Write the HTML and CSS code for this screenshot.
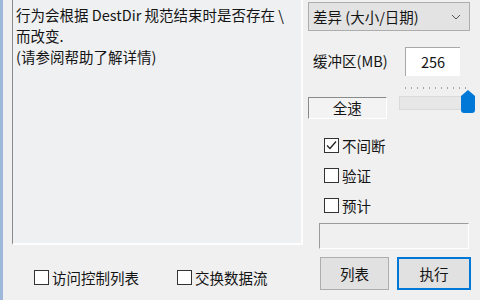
FILE: index.html
```html
<!DOCTYPE html>
<html lang="zh-CN">
<head>
  <meta charset="UTF-8">
  <title>复制选项</title>
  <link rel="stylesheet" href="styles.css">
</head>
<body>
<div class="window">
  <div class="edge"></div>

  <div class="leftside">
    <div class="desc">
      行为会根据 DestDir 规范结束时是否存在 \<br>
      而改变.<br>
      (请参阅帮助了解详情)
    </div>
    <div class="bottom-checks">
      <label class="check"><span class="box"></span>访问控制列表</label>
      <label class="check second"><span class="box"></span>交换数据流</label>
    </div>
  </div>

  <div class="rightside">
    <div class="select">
      <span>差异 (大小/日期)</span>
      <svg class="chevron" width="10" height="6" viewBox="0 0 10 6">
        <polyline points="1,1 5,5 9,1" fill="none" stroke="#555" stroke-width="1"/>
      </svg>
    </div>

    <div class="buffer">
      <span class="buffer-label">缓冲区(MB)</span>
      <div class="inputbox">256</div>
    </div>

    <div class="speed">
      <div class="speedbox">全速</div>
      <div class="slider">
        <div class="ticks"></div>
        <div class="track"></div>
        <svg class="thumb" width="14" height="23" viewBox="0 0 14 23">
          <path d="M0 6 L7 0 L14 6 V20 Q14 23 11 23 H3 Q0 23 0 20 Z" fill="#0078d7"/>
        </svg>
      </div>
    </div>

    <div class="options">
      <label class="check">
        <span class="box">
          <svg width="13" height="13" viewBox="0 0 13 13">
            <polyline points="2,6.5 5,9.5 11,2.5" fill="none" stroke="#222" stroke-width="1.3"/>
          </svg>
        </span>不间断
      </label>
      <label class="check"><span class="box"></span>验证</label>
      <label class="check"><span class="box"></span>预计</label>
    </div>

    <div class="status"></div>

    <div class="buttons">
      <button class="button">列表</button>
      <button class="button default">执行</button>
    </div>
  </div>
</div>
</body>
</html>
```

FILE: styles.css
```css
body {
  margin: 0;
  padding: 0;
  font-family: "Noto Sans CJK SC", "Noto Sans", sans-serif;
  font-size: 14.5px;
  color: #141414;
}

.window {
  width: 480px;
  height: 300px;
  display: flex;
  background: #f0f0f0;
  overflow: hidden;
}

.edge {
  width: 3px;
  background: #9db8d8;
}

/* left column */
.leftside {
  width: 300px;
  display: flex;
  flex-direction: column;
}

.desc {
  margin-left: 9px;
  width: 291px;
  height: 245px;
  box-sizing: border-box;
  padding: 4px 0 0 3px;
  line-height: 21px;
  background: #eff0f1;
  border-left: 1px solid #8a8a8a;
  border-right: 2px solid #fdfdfd;
  border-bottom: 2px solid #fdfdfd;
  white-space: nowrap;
}

.bottom-checks {
  display: flex;
  margin-top: 25px;
  padding-left: 31px;
}

.bottom-checks .second {
  margin-left: 38px;
}

/* checkboxes */
.check {
  display: flex;
  align-items: center;
  height: 15px;
  line-height: 15px;
}

.box {
  width: 15px;
  height: 15px;
  box-sizing: border-box;
  border: 1.5px solid #333;
  background: #fff;
  margin-right: 3px;
  display: flex;
  align-items: center;
  justify-content: center;
}

/* right column */
.rightside {
  margin-left: 5px;
  width: 166px;
  display: flex;
  flex-direction: column;
}

.select {
  margin-top: 2px;
  width: 162px;
  height: 29px;
  box-sizing: border-box;
  border: 1px solid #adadad;
  background: #e3e3e3;
  display: flex;
  align-items: center;
  padding: 0 8px 0 4px;
  justify-content: space-between;
}

.buffer {
  margin-top: 16px;
  height: 29px;
  display: flex;
  align-items: center;
}

.buffer-label {
  padding-left: 5px;
  margin-top: -3px;
}

.inputbox {
  margin-left: auto;
  margin-right: 14px;
  width: 55px;
  height: 29px;
  box-sizing: border-box;
  background: #fff;
  border-top: 1px solid #a8a8a8;
  border-left: 1px solid #a8a8a8;
  text-align: center;
  line-height: 27px;
}

.speed {
  margin-top: 11px;
  display: flex;
}

.speedbox {
  margin-top: 10px;
  width: 79px;
  height: 22px;
  box-sizing: border-box;
  border-top: 1px solid #8a8a8a;
  border-left: 1px solid #8a8a8a;
  border-right: 1px solid #fff;
  border-bottom: 1px solid #fff;
  background: #f3f3f3;
  text-align: center;
  line-height: 20px;
}

.slider {
  position: relative;
  margin-left: 12px;
  width: 76px;
  height: 26px;
}

.ticks {
  margin: 0 6px 0 6px;
  height: 2px;
  background: repeating-linear-gradient(90deg, #a5a5a5 0 1px, transparent 1px 6px);
}

.track {
  margin-top: 7px;
  width: 71px;
  height: 14px;
  box-sizing: border-box;
  background: #e7e7e7;
  border: 1px solid #dadada;
}

.thumb {
  position: absolute;
  left: 62px;
  top: 3px;
}

.options {
  margin-top: 19px;
  margin-left: 16px;
  display: flex;
  flex-direction: column;
  gap: 15px;
}

.status {
  margin-top: 10px;
  margin-left: 11px;
  width: 150px;
  height: 26px;
  box-sizing: border-box;
  border-top: 1px solid #9a9a9a;
  border-left: 1px solid #9a9a9a;
  border-right: 1px solid #fff;
  border-bottom: 1px solid #fff;
}

.buttons {
  margin-top: 8px;
  margin-left: 12px;
  display: flex;
  gap: 8px;
}

.button {
  width: 69px;
  height: 33px;
  border: 1px solid #adadad;
  background: #e1e1e1;
  font-family: inherit;
  font-size: 14.5px;
  color: #141414;
  padding: 0;
}

.button.default {
  width: 74px;
  border: 2px solid #0078d7;
}
```
